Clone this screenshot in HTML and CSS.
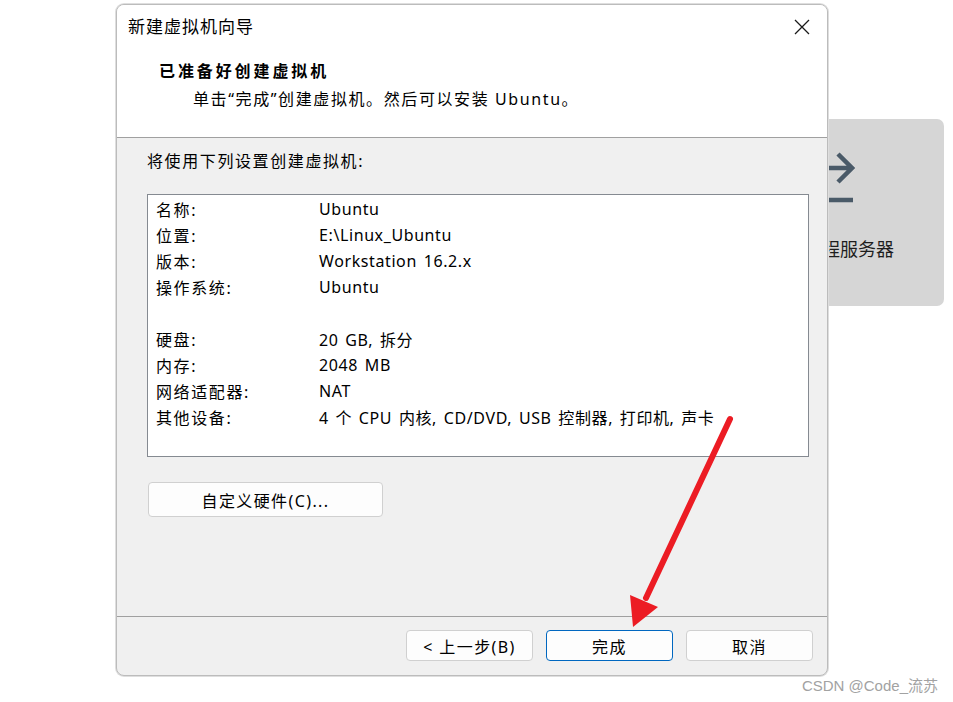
FILE: index.html
```html
<!DOCTYPE html>
<html lang="zh-CN">
<head>
  <meta charset="UTF-8">
  <title>新建虚拟机向导</title>
  <link rel="stylesheet" href="styles.css">
</head>
<body>
  <div class="server-card">
    <svg class="server-icon" width="48" height="56" viewBox="0 0 48 56">
      <path d="M8 20 H45 M31 6 L45 20 L31 34" fill="none" stroke="#4a5a68" stroke-width="4.5"/>
      <path d="M8 52 H46" stroke="#4a5a68" stroke-width="4.5"/>
    </svg>
    <p>连接远程服务器</p>
  </div>

  <div class="wizard">
    <header class="wizard-head">
      <div class="title-bar">
        <span class="title">新建虚拟机向导</span>
        <svg class="close" width="16" height="16" viewBox="0 0 16 16">
          <path d="M1 1 L15 15 M15 1 L1 15" stroke="#1a1a1a" stroke-width="1.3"/>
        </svg>
      </div>
      <h2>已准备好创建虚拟机</h2>
      <p class="sub">单击“完成”创建虚拟机。然后可以安装 Ubuntu。</p>
    </header>

    <section class="wizard-body">
      <p class="intro">将使用下列设置创建虚拟机:</p>
      <div class="summary">
        <div class="row"><span class="label">名称:</span><span class="value">Ubuntu</span></div>
        <div class="row"><span class="label">位置:</span><span class="value">E:\Linux_Ubuntu</span></div>
        <div class="row"><span class="label">版本:</span><span class="value">Workstation 16.2.x</span></div>
        <div class="row"><span class="label">操作系统:</span><span class="value">Ubuntu</span></div>
        <div class="row"></div>
        <div class="row"><span class="label">硬盘:</span><span class="value">20 GB, 拆分</span></div>
        <div class="row"><span class="label">内存:</span><span class="value">2048 MB</span></div>
        <div class="row"><span class="label">网络适配器:</span><span class="value">NAT</span></div>
        <div class="row"><span class="label">其他设备:</span><span class="value">4 个 CPU 内核, CD/DVD, USB 控制器, 打印机, 声卡</span></div>
      </div>
      <button class="btn custom">自定义硬件(C)...</button>
    </section>

    <footer class="wizard-foot">
      <button class="btn">&lt; 上一步(B)</button>
      <button class="btn primary">完成</button>
      <button class="btn">取消</button>
    </footer>
  </div>

  <svg class="annotation" width="953" height="702" viewBox="0 0 953 702">
    <line x1="730" y1="419" x2="646" y2="598" stroke="#ec1c24" stroke-width="6" stroke-linecap="round"/>
    <polygon points="633,627 630,595 658,607" fill="#ec1c24"/>
  </svg>

  <div class="watermark">CSDN @Code_流苏</div>
</body>
</html>
```

FILE: styles.css
```css
* {
  margin: 0;
  padding: 0;
  box-sizing: border-box;
}

body {
  position: relative;
  width: 953px;
  height: 702px;
  overflow: hidden;
  background: #fff;
  color: #000;
  font-family: "Noto Sans", "Noto Sans CJK SC", sans-serif;
  font-size: 16px;
}

.server-card {
  position: absolute;
  left: 718px;
  top: 119px;
  width: 226px;
  height: 187px;
  background: #d6d6d6;
  border-radius: 7px;
  padding-top: 29px;
  display: flex;
  flex-direction: column;
  align-items: center;
}

.server-card p {
  margin-top: 33px;
  font-size: 18px;
  line-height: 24px;
  color: #1e1e1e;
}

.wizard {
  position: relative;
  z-index: 2;
  margin: 4px 0 0 116px;
  width: 712px;
  height: 672px;
  border: 1px solid #bcbcbc;
  border-radius: 8px;
  box-shadow: 0 0 0 1px #dedede;
  overflow: hidden;
  display: flex;
  flex-direction: column;
  background: #f0f0f0;
}

.wizard-head {
  height: 133px;
  background: #fff;
  border-bottom: 1px solid #a0a0a0;
  padding: 8px 0 0 11px;
}

.title-bar {
  display: flex;
  justify-content: space-between;
  align-items: center;
  height: 24px;
}

.title {
  font-size: 17px;
  letter-spacing: 1px;
}

.close {
  margin: 4px 17px 0 0;
}

.wizard-head h2 {
  margin: 22px 0 0 31px;
  font-size: 16px;
  line-height: 24px;
  letter-spacing: 2.9px;
  font-weight: 700;
}

.sub {
  margin: 4px 0 0 65px;
  line-height: 24px;
  letter-spacing: 1.6px;
}

.wizard-body {
  height: 479px;
  border-bottom: 1px solid #a0a0a0;
  padding: 11px 0 0 30px;
}

.intro {
  line-height: 24px;
  letter-spacing: 1.6px;
}

.summary {
  margin-top: 21px;
  width: 662px;
  height: 263px;
  background: #fff;
  border: 1px solid #858a91;
  padding: 1px 8px;
}

.row {
  display: flex;
  height: 26px;
  align-items: center;
}

.label {
  width: 163px;
  letter-spacing: 1.6px;
}

.value {
  letter-spacing: 0.6px;
  word-spacing: 2px;
}

.btn {
  width: 127px;
  height: 31px;
  background: #fdfdfd;
  border: 1px solid #d0d0d0;
  border-radius: 4px;
  font-family: inherit;
  font-size: 16px;
  color: #000;
  letter-spacing: 1.4px;
}

.custom {
  margin: 25px 0 0 1px;
  width: 235px;
  height: 35px;
}

.wizard-foot {
  flex: 1;
  display: flex;
  justify-content: flex-end;
  gap: 13px;
  padding: 13px 14px 0 0;
}

.primary {
  border-color: #0067c0;
}

.annotation {
  position: absolute;
  left: 0;
  top: 0;
  z-index: 3;
  pointer-events: none;
}

.watermark {
  position: absolute;
  right: 15px;
  top: 674px;
  z-index: 3;
  font-family: "Liberation Sans", "Noto Sans CJK SC", sans-serif;
  font-size: 15px;
  color: #a2a2a2;
}
```
